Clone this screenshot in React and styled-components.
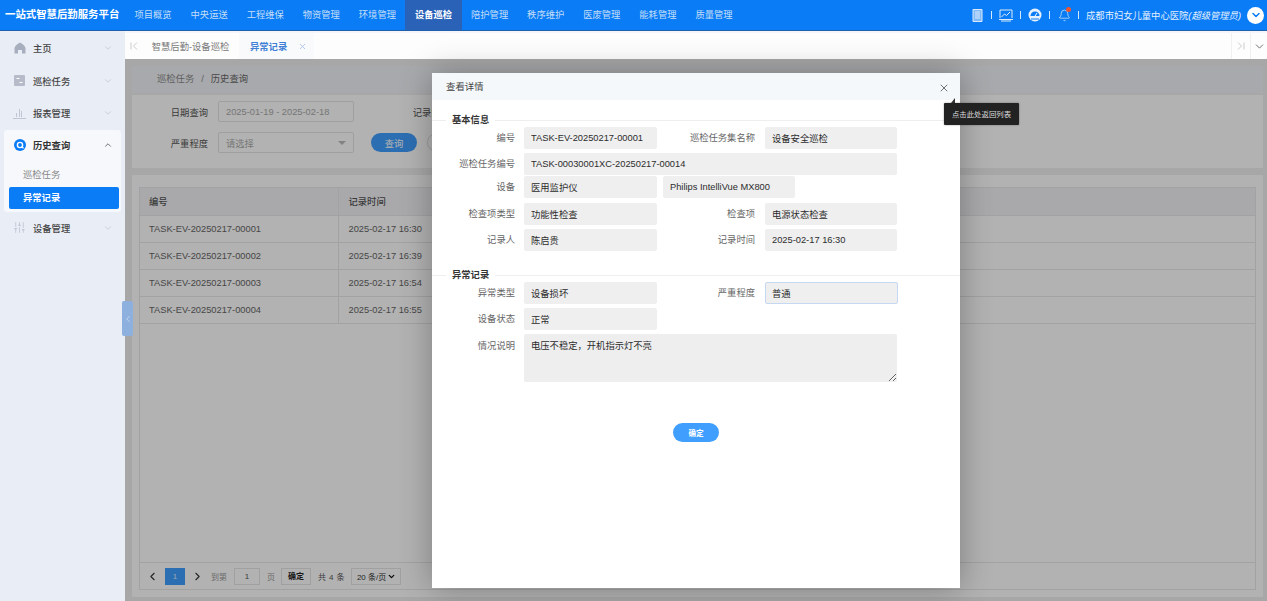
import React from 'react'
import styled, { createGlobalStyle } from 'styled-components'
import { ChevronDown, ChevronUp, ChevronLeft, ChevronRight, X, SlidersVertical, Bell } from 'lucide-react'

const GlobalStyle = createGlobalStyle`
  html, body { margin: 0; padding: 0; height: 100%; overflow: hidden; }
  body { font-family: "Liberation Sans", "Noto Sans CJK SC", sans-serif; font-size: 9.3px; color: #333; }
  * { box-sizing: border-box; }
`

const Page = styled.div`
  width: 1267px;
  height: 601px;
  display: flex;
  flex-direction: column;
  overflow: hidden;
`

const TopBar = styled.header`
  height: 31px;
  flex: none;
  display: flex;
  background: #0a7cf6;
  border-bottom: 1px solid #1f5fae;
  color: #fff;
`

const Brand = styled.div`
  width: 125px;
  flex: none;
  padding-left: 5px;
  line-height: 30px;
  font-size: 10.4px;
  font-weight: 700;
  white-space: nowrap;
`

const Nav = styled.nav`
  display: flex;
`

const NavItem = styled.a`
  width: 56.1px;
  text-align: center;
  line-height: 30px;
  white-space: nowrap;
  color: ${p => (p.$active ? '#fff' : '#c4def8')};
  font-weight: ${p => (p.$active ? 700 : 400)};
  background: ${p => (p.$active ? '#2a62b8' : 'transparent')};
`

const TopRight = styled.div`
  margin-left: auto;
  display: flex;
  align-items: center;
  padding-right: 3px;
`

const TopIcon = styled.span`
  width: 14px;
  height: 14px;
  display: flex;
  align-items: center;
  justify-content: center;
  position: relative;
`

const Sep = styled.i`
  width: 1px;
  height: 8px;
  margin: 0 7px;
  background: #d5e8fb;
`

const RedDot = styled.b`
  position: absolute;
  top: -1px;
  right: 0;
  width: 5px;
  height: 5px;
  border-radius: 50%;
  background: #f0552f;
`

const Hospital = styled.span`
  white-space: nowrap;
  color: #e6f1fd;
  em { font-style: italic; }
`

const Avatar = styled.span`
  width: 17px;
  height: 17px;
  margin-left: 6px;
  border-radius: 50%;
  background: #fff;
  display: flex;
  align-items: center;
  justify-content: center;
  color: #0a7cf6;
`

const Body = styled.div`
  flex: 1;
  display: flex;
  min-height: 0;
  position: relative;
`

const Sidebar = styled.aside`
  width: 125px;
  flex: none;
  padding-top: 1px;
  background: #e9edf5;
`

const MenuItem = styled.div`
  height: 32.5px;
  display: flex;
  align-items: center;
  padding: 0 13px;
  color: #444;
  font-weight: 500;
`

const MenuIcon = styled.span`
  width: 13px;
  height: 13px;
  margin-right: 7px;
  display: flex;
  align-items: center;
  justify-content: center;
  color: #a7aebd;
`

const MenuArrow = styled.span`
  margin-left: auto;
  margin-right: -1px;
  display: flex;
  color: ${p => (p.$open ? '#555' : '#c3c8d2')};
`

const MenuGroup = styled.div`
  margin: 0 4px;
  height: 82px;
  background: #f6f8fb;
  border-radius: 3px;
`

const GroupHead = styled(MenuItem)`
  padding: 0 9px;
  height: 31px;
  color: #333;
  font-weight: 700;
`

const SubList = styled.div`
  padding-top: 3px;
  display: flex;
  flex-direction: column;
  gap: 1px;
`

const SubItem = styled.div`
  height: 22px;
  margin: 0 2px 0 5px;
  padding-left: 14px;
  line-height: 22px;
  border-radius: 2px;
  color: ${p => (p.$active ? '#fff' : '#888')};
  font-weight: ${p => (p.$active ? 700 : 400)};
  background: ${p => (p.$active ? '#0a7cf6' : 'transparent')};
`

const Handle = styled.div`
  position: absolute;
  left: 122px;
  top: 270px;
  width: 11px;
  height: 35px;
  z-index: 3;
  border-radius: 2px;
  background: #8db0de;
  color: #cfdcf0;
  display: flex;
  align-items: center;
  justify-content: center;
`

const Main = styled.main`
  flex: 1;
  min-width: 0;
  display: flex;
  flex-direction: column;
`

const TabBar = styled.div`
  height: 28px;
  flex: none;
  display: flex;
  background: #fdfdfd;
  border-top: 2px solid #f4f6f9;
  color: #777;
`

const TabEdge = styled.span`
  width: ${p => p.$w}px;
  display: flex;
  align-items: center;
  justify-content: center;
  color: ${p => p.$color || '#ccc'};
  border-left: ${p => (p.$line ? '1px solid #f0f0f0' : 'none')};
  margin-left: ${p => (p.$push ? 'auto' : 0)};
`

const Tab = styled.div`
  display: flex;
  align-items: center;
  justify-content: ${p => (p.$active ? 'flex-start' : 'center')};
  width: ${p => p.$w}px;
  padding-left: ${p => (p.$active ? 11 : 0)}px;
  background: ${p => (p.$active ? '#f9fafb' : '#fdfdfd')};
  color: ${p => (p.$active ? '#3f7fd6' : '#7a7a7a')};
  font-weight: ${p => (p.$active ? 700 : 400)};
  white-space: nowrap;
  svg { margin-left: 11px; color: #9db9e4; }
`

const Content = styled.div`
  flex: 1;
  position: relative;
  background: #f0f0f0;
  padding: 7px 4px 4px 7px;
  display: flex;
  flex-direction: column;
  gap: 2px;
  min-height: 0;
`

const Crumb = styled.div`
  height: 27px;
  flex: none;
  padding-left: 25px;
  line-height: 27px;
  background: #f1f3f7;
  color: #888;
  span { margin: 0 7px; }
  b { font-weight: 400; color: #666; }
`

const FilterPanel = styled.section`
  height: 73px;
  flex: none;
  background: #fff;
  padding: 6px 0 0;
  display: flex;
  flex-direction: column;
  gap: 10px;
`

const FilterRow = styled.div`
  display: flex;
  align-items: center;
  height: 21px;
`

const FilterLabel = styled.label`
  width: ${p => p.$w || 76}px;
  margin-right: 10px;
  text-align: right;
  color: #555;
  flex: none;
`

const FilterBox = styled.div`
  width: 136px;
  height: 21px;
  padding: 0 7px;
  display: flex;
  align-items: center;
  justify-content: space-between;
  border: 1px solid #e4e4e4;
  border-radius: 2px;
  color: #aaa;
`

const Caret = styled.i`
  width: 0;
  height: 0;
  border-left: 4px solid transparent;
  border-right: 4px solid transparent;
  border-top: 4px solid #bbb;
`

const QueryButton = styled.button`
  width: 46px;
  height: 19px;
  margin-left: ${p => p.$left}px;
  padding: 0;
  border: ${p => (p.$plain ? '1px solid #ddd' : 'none')};
  border-radius: 10px;
  background: ${p => (p.$plain ? '#fff' : '#409eff')};
  color: ${p => (p.$plain ? '#666' : '#fff')};
  font: inherit;
`

const TablePanel = styled.section`
  flex: 1;
  margin-top: 5px;
  background: #fff;
  padding: 12px 7px 7px;
  display: flex;
  min-height: 0;
`

const TableBox = styled.div`
  flex: 1;
  border: 1px solid #e8e8e8;
  display: flex;
  flex-direction: column;
`

const Table = styled.table`
  width: 100%;
  border-collapse: collapse;
  table-layout: fixed;
  color: #666;
  th, td {
    height: 27px;
    padding: 0 10px;
    text-align: left;
    border-bottom: 1px solid #e8e8e8;
    font-size: 9.3px;
  }
  th { background: #f2f3f6; color: #555; font-weight: 500; }
  th:first-child, td:first-child { width: 198px; padding-left: 9px; border-right: 1px solid #e8e8e8; }
`

const Pager = styled.div`
  margin-top: auto;
  height: 27px;
  border-top: 1px solid #e8e8e8;
  display: flex;
  align-items: center;
  padding-left: 6px;
  color: #888;
  font-size: 8px;
`

const PagerArrow = styled.span`
  display: flex;
  color: #333;
  margin: ${p => p.$m};
`

const PageNo = styled.span`
  width: 20px;
  height: 17px;
  line-height: 17px;
  text-align: center;
  background: #409eff;
  color: #dcecff;
`

const PagerInput = styled.span`
  width: 26px;
  height: 17px;
  margin: 0 7px;
  line-height: 15px;
  text-align: center;
  border: 1px solid #e6e6e6;
  color: #555;
`

const PagerButton = styled.span`
  width: 30px;
  height: 17px;
  margin: 0 7px 0 6px;
  line-height: 15px;
  text-align: center;
  border: 1px solid #e6e6e6;
  color: #222;
  font-weight: 700;
`

const PagerText = styled.span`
  color: ${p => p.$dark ? '#555' : '#999'};
  letter-spacing: ${p => p.$dark ? '.4px' : 0};
`

const PagerSelect = styled.div`
  width: 50px;
  height: 17px;
  margin-left: 6px;
  padding: 0 4px 0 5px;
  display: flex;
  align-items: center;
  justify-content: space-between;
  color: #333;
  background: #fff;
  border: 1px solid #e6e6e6;
  white-space: nowrap;
  svg { color: #111; flex: none; }
`

const Overlay = styled.div`
  position: absolute;
  inset: 0;
  background: rgba(0, 0, 0, .3);
`

const Modal = styled.div`
  position: absolute;
  left: 307px;
  top: 14px;
  width: 528px;
  height: 515px;
  background: #fff;
  box-shadow: 0 0 30px rgba(0, 0, 0, .3);
`

const ModalHead = styled.div`
  height: 27px;
  padding-left: 14px;
  line-height: 27px;
  background: #f5f8fb;
  color: #444;
  font-size: 9.4px;
`

const CloseBtn = styled.span`
  position: absolute;
  right: 10px;
  top: 9px;
  display: flex;
  color: #444;
`

const Tip = styled.div`
  position: absolute;
  left: 512px;
  top: 30px;
  width: 75px;
  height: 22px;
  line-height: 22px;
  text-align: center;
  font-family: "Noto Sans CJK SC", serif;
  font-size: 7.4px;
  color: #ddd;
  background: #222;
  border-radius: 1px;
  box-shadow: 0 0 2px rgba(0, 0, 0, .4);
  white-space: nowrap;
  &::before {
    content: '';
    position: absolute;
    left: 7px;
    top: -5px;
    border-left: 4px solid transparent;
    border-bottom: 5px solid #333;
  }
`

const Section = styled.fieldset`
  margin: ${p => p.$top}px 0 0;
  padding: 0;
  border: none;
  border-top: 1px solid #eee;
`

const SectionTitle = styled.legend`
  margin-left: 14px;
  padding: 0 6px;
  font-weight: 700;
  color: #333;
  line-height: 12px;
`

const Row = styled.div`
  display: flex;
  height: ${p => p.$h || 22}px;
  margin-bottom: ${p => p.$after ?? 4}px;
`

const Label = styled.label`
  width: ${p => p.$w || 92}px;
  flex: none;
  padding-right: ${p => (p.$w ? 10 : 9)}px;
  text-align: right;
  line-height: ${p => p.$line || 22}px;
  color: #666;
  white-space: nowrap;
`

const Field = styled.input`
  width: ${p => p.$w || 133}px;
  height: 22px;
  flex: none;
  margin-left: ${p => p.$left || 0}px;
  padding: 0 6px;
  border: 1px solid ${p => (p.$focus ? '#c6d7f2' : '#efefef')};
  border-radius: 2px;
  background: #efefef;
  color: #2c2c2c;
  font: inherit;
  outline: none;
`

const Note = styled.textarea`
  width: 373px;
  height: 48px;
  padding: 4px 7px;
  border: none;
  border-radius: 2px;
  background: #eee;
  color: #2c2c2c;
  font: inherit;
  outline: none;
`

const Fields = styled.div`
  padding-top: ${p => p.$top}px;
`

const OkButton = styled.button`
  display: block;
  width: 46px;
  height: 19px;
  margin: 41px 0 0 241px;
  padding: 0;
  border: none;
  border-radius: 10px;
  background: #409eff;
  color: #fff;
  font: inherit;
  font-size: 7.6px;
  font-weight: 700;
`

const DocIcon = () => (
  <svg width="11" height="13" viewBox="0 0 11 13" fill="none" stroke="#dcebfb" strokeWidth="1">
    <path d="M1 .5h9v12H1z" fill="#7fb9f8" />
    <path d="M3 3h5M3 5h5M3 7h5M3 9h5" />
  </svg>
)

const ChartIcon = () => (
  <svg width="14" height="13" viewBox="0 0 14 13" fill="none" stroke="#dcebfb" strokeWidth="1">
    <path d="M1 9V1h12v8M0 10.5h14M2 12h10" />
    <path d="M2.5 8l3-3 2 1.5L11 3" />
  </svg>
)

const GaugeIcon = () => (
  <svg width="14" height="14" viewBox="0 0 14 14">
    <circle cx="7" cy="7" r="6.5" fill="#e6f1fd" />
    <path d="M2.5 8a4.5 4.5 0 0 1 9 0z" fill="#0a7cf6" />
    <path d="M7 8l2-3" stroke="#fff" />
    <path d="M3 11h8" stroke="#0a7cf6" />
  </svg>
)

const HomeIcon = () => (
  <svg width="12" height="12" viewBox="0 0 12 12" fill="#a7aebd">
    <path d="M6 .5C8 1.5 11 3.5 11.5 6v5.5H8V8H4v3.5H.5V6C1 3.5 4 1.5 6 .5z" />
  </svg>
)

const TaskIcon = () => (
  <svg width="11" height="11" viewBox="0 0 11 11">
    <rect width="11" height="11" rx="1" fill="#b5bbc9" />
    <path d="M2.5 3.5h3M5.5 7.5h3" stroke="#fff" strokeWidth="1.2" />
  </svg>
)

const ReportIcon = () => (
  <svg width="13" height="11" viewBox="0 0 13 11" fill="#c0c5d0">
    <path d="M3 5h1v4H3zM6 1h1v8H6zM8 3h1v6H8z" />
    <path d="M0 10h13v1H0z" />
  </svg>
)

const SearchIcon = () => (
  <svg width="12" height="12" viewBox="0 0 12 12">
    <circle cx="6" cy="6" r="6" fill="#0a7cf6" />
    <circle cx="6" cy="6" r="2.6" fill="none" stroke="#fff" strokeWidth="1.4" />
    <path d="M7.6 7.8l2 1.4" stroke="#fff" strokeWidth="1.4" />
  </svg>
)

const FirstIcon = () => (
  <svg width="8" height="8" viewBox="0 0 8 8" fill="none" stroke="currentColor">
    <path d="M1 .5v7M7 .5L3.5 4 7 7.5" />
  </svg>
)

const LastIcon = () => (
  <svg width="8" height="8" viewBox="0 0 8 8" fill="none" stroke="currentColor">
    <path d="M7 .5v7M1 .5L4.5 4 1 7.5" />
  </svg>
)

const navItems = ['项目概览', '中央运送', '工程维保', '物资管理', '环境管理', '设备巡检', '陪护管理', '秩序维护', '医废管理', '能耗管理', '质量管理']
const rows = [
  ['TASK-EV-20250217-00001', '2025-02-17 16:30'],
  ['TASK-EV-20250217-00002', '2025-02-17 16:39'],
  ['TASK-EV-20250217-00003', '2025-02-17 16:54'],
  ['TASK-EV-20250217-00004', '2025-02-17 16:55'],
]

export default function App() {
  return (
    <Page>
      <GlobalStyle />
      <TopBar>
        <Brand>一站式智慧后勤服务平台</Brand>
        <Nav>
          {navItems.map(n => (
            <NavItem key={n} $active={n === '设备巡检'}>{n}</NavItem>
          ))}
        </Nav>
        <TopRight>
          <TopIcon><DocIcon /></TopIcon>
          <Sep />
          <TopIcon><ChartIcon /></TopIcon>
          <Sep />
          <TopIcon><GaugeIcon /></TopIcon>
          <Sep />
          <TopIcon>
            <Bell size={13} strokeWidth={1.2} color="#e6f1fd" />
            <RedDot />
          </TopIcon>
          <Sep />
          <Hospital>成都市妇女儿童中心医院<em>(超级管理员)</em></Hospital>
          <Avatar><ChevronDown size={12} strokeWidth={3} /></Avatar>
        </TopRight>
      </TopBar>
      <Body>
        <Sidebar>
          <MenuItem>
            <MenuIcon><HomeIcon /></MenuIcon>主页
            <MenuArrow><ChevronDown size={10} /></MenuArrow>
          </MenuItem>
          <MenuItem>
            <MenuIcon><TaskIcon /></MenuIcon>巡检任务
            <MenuArrow><ChevronDown size={10} /></MenuArrow>
          </MenuItem>
          <MenuItem>
            <MenuIcon><ReportIcon /></MenuIcon>报表管理
            <MenuArrow><ChevronDown size={10} /></MenuArrow>
          </MenuItem>
          <MenuGroup>
            <GroupHead>
              <MenuIcon><SearchIcon /></MenuIcon>历史查询
              <MenuArrow $open><ChevronUp size={10} /></MenuArrow>
            </GroupHead>
            <SubList>
              <SubItem>巡检任务</SubItem>
              <SubItem $active>异常记录</SubItem>
            </SubList>
          </MenuGroup>
          <MenuItem>
            <MenuIcon><SlidersVertical size={13} strokeWidth={1} /></MenuIcon>设备管理
            <MenuArrow><ChevronDown size={10} /></MenuArrow>
          </MenuItem>
        </Sidebar>
        <Handle><ChevronLeft size={10} /></Handle>
        <Main>
          <TabBar>
            <TabEdge $w={17}><FirstIcon /></TabEdge>
            <Tab $w={97}>智慧后勤-设备巡检</Tab>
            <Tab $w={75} $active>异常记录<X size={9} /></Tab>
            <TabEdge $w={19} $push $line><LastIcon /></TabEdge>
            <TabEdge $w={17} $line $color="#555"><ChevronDown size={13} strokeWidth={1.5} /></TabEdge>
          </TabBar>
          <Content>
            <Crumb>巡检任务<span>/</span><b>历史查询</b></Crumb>
            <FilterPanel>
              <FilterRow>
                <FilterLabel>日期查询</FilterLabel>
                <FilterBox>2025-01-19 - 2025-02-18</FilterBox>
                <FilterLabel $w={96}>记录时间</FilterLabel>
                <FilterBox />
              </FilterRow>
              <FilterRow>
                <FilterLabel>严重程度</FilterLabel>
                <FilterBox>请选择<Caret /></FilterBox>
                <QueryButton $left={17}>查询</QueryButton>
                <QueryButton $left={10} $plain>重置</QueryButton>
              </FilterRow>
            </FilterPanel>
            <TablePanel>
              <TableBox>
                <Table>
                  <thead>
                    <tr><th>编号</th><th>记录时间</th></tr>
                  </thead>
                  <tbody>
                    {rows.map(r => (
                      <tr key={r[0]}><td>{r[0]}</td><td>{r[1]}</td></tr>
                    ))}
                  </tbody>
                </Table>
                <Pager>
                  <PagerArrow $m="0 6px 0 0"><ChevronLeft size={13} /></PagerArrow>
                  <PageNo>1</PageNo>
                  <PagerArrow $m="0 7px 0 6px"><ChevronRight size={13} /></PagerArrow>
                  <PagerText>到第</PagerText>
                  <PagerInput>1</PagerInput>
                  <PagerText>页</PagerText>
                  <PagerButton>确定</PagerButton>
                  <PagerText $dark>共 4 条</PagerText>
                  <PagerSelect>20 条/页<ChevronDown size={9} strokeWidth={3.5} /></PagerSelect>
                </Pager>
              </TableBox>
            </TablePanel>
            <Overlay />
            <Modal>
              <ModalHead>查看详情</ModalHead>
              <CloseBtn><X size={12} strokeWidth={1.5} /></CloseBtn>
              <Tip>点击此处返回列表</Tip>
              <Section $top={14}>
                <SectionTitle>基本信息</SectionTitle>
                <Fields $top={1}>
                  <Row>
                    <Label>编号</Label>
                    <Field readOnly value="TASK-EV-20250217-00001" />
                    <Label $w={108}>巡检任务集名称</Label>
                    <Field $w={132} readOnly value="设备安全巡检" />
                  </Row>
                  <Row $after={1}>
                    <Label>巡检任务编号</Label>
                    <Field $w={373} readOnly value="TASK-00030001XC-20250217-00014" />
                  </Row>
                  <Row $after={5}>
                    <Label>设备</Label>
                    <Field readOnly value="医用监护仪" />
                    <Field $left={6} $w={132} readOnly value="Philips IntelliVue MX800" />
                  </Row>
                  <Row>
                    <Label>检查项类型</Label>
                    <Field readOnly value="功能性检查" />
                    <Label $w={108}>检查项</Label>
                    <Field $w={132} readOnly value="电源状态检查" />
                  </Row>
                  <Row>
                    <Label>记录人</Label>
                    <Field readOnly value="陈启贵" />
                    <Label $w={108}>记录时间</Label>
                    <Field $w={132} readOnly value="2025-02-17 16:30" />
                  </Row>
                </Fields>
              </Section>
              <Section $top={14}>
                <SectionTitle>异常记录</SectionTitle>
                <Fields $top={1}>
                  <Row>
                    <Label>异常类型</Label>
                    <Field readOnly value="设备损坏" />
                    <Label $w={108}>严重程度</Label>
                    <Field $w={133} $focus readOnly value="普通" />
                  </Row>
                  <Row>
                    <Label>设备状态</Label>
                    <Field readOnly value="正常" />
                  </Row>
                  <Row $h={48} $after={0}>
                    <Label $line={25}>情况说明</Label>
                    <Note readOnly defaultValue="电压不稳定，开机指示灯不亮" />
                  </Row>
                </Fields>
              </Section>
              <OkButton>确定</OkButton>
            </Modal>
          </Content>
        </Main>
      </Body>
    </Page>
  )
}
